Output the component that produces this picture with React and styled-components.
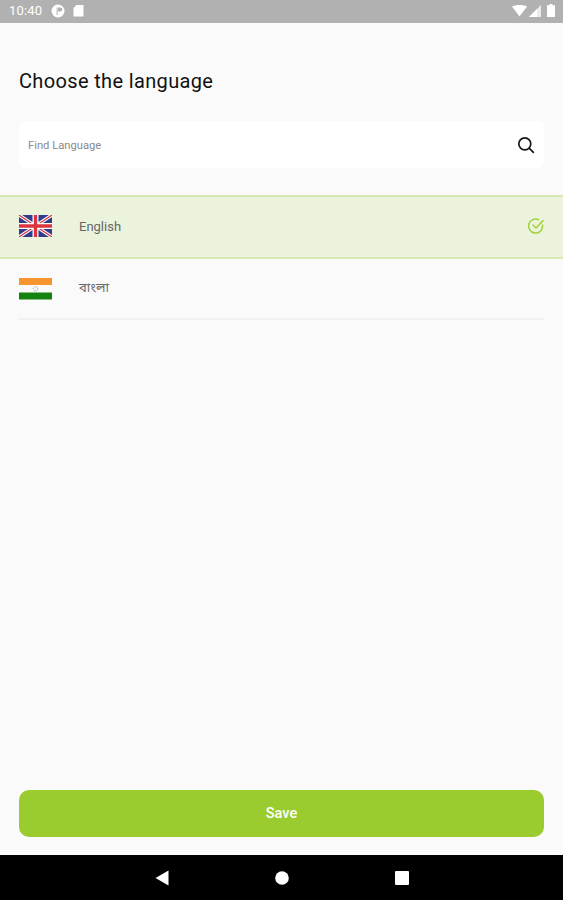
import styled, { createGlobalStyle } from "styled-components";

const GlobalStyle = createGlobalStyle`
  html, body {
    margin: 0;
    padding: 0;
    background: #fafafa;
  }
  * {
    box-sizing: border-box;
  }
`;

const Screen = styled.div`
  width: 563px;
  height: 900px;
  display: flex;
  flex-direction: column;
  background: #fafafa;
  font-family: Roboto, "Noto Sans", sans-serif;
  overflow: hidden;
`;

const StatusBar = styled.div`
  height: 23px;
  flex-shrink: 0;
  background: #b1b1b1;
  display: flex;
  align-items: center;
  justify-content: space-between;
  padding: 0 8px 2px 9px;
  color: #fff;
`;

const StatusGroup = styled.div`
  display: flex;
  align-items: center;
  gap: ${(p) => p.$gap || 8}px;
`;

const Clock = styled.span`
  font-size: 13px;
  margin-right: 1px;
  letter-spacing: 0.2px;
`;

const BatteryIcon = styled.svg`
  margin-left: 4px;
`;

const Content = styled.main`
  flex: 1;
  display: flex;
  flex-direction: column;
`;

const Title = styled.h1`
  margin: 46px 0 0 19px;
  font-size: 20px;
  line-height: 24px;
  font-weight: 400;
  letter-spacing: 0.35px;
  color: #111;
`;

const SearchBox = styled.div`
  margin: 28px 19px 0;
  height: 47px;
  background: #fff;
  border-radius: 6px;
  display: flex;
  align-items: center;
  justify-content: space-between;
  padding: 0 9px;
`;

const SearchText = styled.span`
  font-size: 11.2px;
  line-height: 15px;
  padding-top: 2px;
  color: #8a8a8a;
`;

const LanguageList = styled.div`
  margin-top: 27px;
  display: flex;
  flex-direction: column;
`;

const LanguageRow = styled.div`
  height: ${(p) => (p.$selected ? 64 : 61)}px;
  display: flex;
  align-items: center;
  padding: ${(p) => (p.$selected ? "0 18px 2px 19px" : "1px 0 0")};
  margin: ${(p) => (p.$selected ? "0" : "0 19px")};
  background: ${(p) => (p.$selected ? "#ebf3dd" : "transparent")};
  border-top: ${(p) => (p.$selected ? "2px solid #d8e8b2" : "none")};
  border-bottom: 2px solid ${(p) => (p.$selected ? "#d8e8b2" : "#f0f0f0")};
`;

const FlagBox = styled.div`
  width: 33px;
  height: 22px;
  flex-shrink: 0;
  margin-right: 27px;
  display: flex;
`;

const LanguageName = styled.span`
  flex: 1;
  font-size: 13px;
  color: #666;
  padding-bottom: ${(p) => p.$lift || 0}px;
  font-family: Roboto, "Noto Sans", "Noto Sans Bengali", "Lohit Bengali", sans-serif;
`;

const SaveWrap = styled.div`
  margin-top: auto;
  padding: 0 19px 18px;
`;

const SaveButton = styled.button`
  display: block;
  width: 100%;
  height: 47px;
  border: none;
  border-radius: 10px;
  background: #9bcc2f;
  color: #fff;
  font-family: Roboto, sans-serif;
  font-size: 14.5px;
  font-weight: 500;
`;

const NavBar = styled.nav`
  height: 45px;
  flex-shrink: 0;
  background: #000;
  display: flex;
  align-items: center;
  justify-content: center;
  gap: 106px;
`;

const UkFlag = () => (
  <svg width="33" height="22" viewBox="0 0 33 22">
    <rect width="33" height="22" fill="#2f3d8c" />
    <path d="M0 0L33 22M33 0L0 22" stroke="#fff" strokeWidth="3.4" />
    <path d="M0 0L33 22M33 0L0 22" stroke="#d8343f" strokeWidth="1.2" />
    <path d="M16.5 0V22M0 11H33" stroke="#fff" strokeWidth="6" />
    <path d="M16.5 0V22M0 11H33" stroke="#dc3540" strokeWidth="3.4" />
  </svg>
);

const IndiaFlag = () => (
  <svg width="33" height="22" viewBox="0 0 33 22">
    <rect width="33" height="7" fill="#f7962f" />
    <rect y="7" width="33" height="7.5" fill="#fafafa" />
    <rect y="14.5" width="33" height="7" fill="#14820f" />
    <circle cx="16.5" cy="10.8" r="2.2" fill="none" stroke="#9a9aa8" strokeWidth="0.9" strokeDasharray="1.2 0.8" />
  </svg>
);

const SearchIcon = () => (
  <svg width="18" height="18" viewBox="0 0 18 18" fill="none" stroke="#161616" strokeWidth="1.7" strokeLinecap="round">
    <circle cx="7.8" cy="7.8" r="6" />
    <path d="M12.4 12.4L16.4 16.4" />
  </svg>
);

const CheckIcon = () => (
  <svg width="18" height="18" viewBox="0 0 18 18" fill="none" stroke="#a3d13c" strokeWidth="1.6" strokeLinecap="round" strokeLinejoin="round">
    <path d="M15.6 8.2V9a7 7 0 1 1-4.1-6.4" />
    <path d="M6 8l3 3 7-7.4" />
  </svg>
);

const App = () => {
  return (
    <>
      <GlobalStyle />
      <Screen>
        <StatusBar>
          <StatusGroup>
            <Clock>10:40</Clock>
            <svg width="14" height="14" viewBox="0 0 14 14">
              <circle cx="7" cy="7" r="6.5" fill="#fff" />
              <path d="M7 3.5h2.4a2 2 0 0 1 0 4H7zM5.6 3.5H6.6V11H5.6z" fill="#b1b1b1" />
            </svg>
            <svg width="11" height="13" viewBox="0 0 11 13">
              <path d="M3.5 1H10.5v11.5H0.5V4z" fill="#fff" />
            </svg>
          </StatusGroup>
          <StatusGroup $gap={2}>
            <svg width="15" height="12" viewBox="0 0 15 12">
              <path d="M0 1.5C4 -0.5 11 -0.5 15 1.5L7.5 11.5z" fill="#fff" />
            </svg>
            <svg width="12" height="12" viewBox="0 0 12 12">
              <path d="M12 0V12H0z" fill="#fff" opacity="0.75" />
              <path d="M8 4V12H0z" fill="#fff" />
            </svg>
            <BatteryIcon width="8" height="13" viewBox="0 0 8 13">
              <path d="M2.5 0h3v1.2H8V13H0V1.2h2.5z" fill="#fff" />
            </BatteryIcon>
          </StatusGroup>
        </StatusBar>

        <Content>
          <Title>Choose the language</Title>
          <SearchBox>
            <SearchText>Find Language</SearchText>
            <SearchIcon />
          </SearchBox>

          <LanguageList>
            <LanguageRow $selected>
              <FlagBox>
                <UkFlag />
              </FlagBox>
              <LanguageName>English</LanguageName>
              <CheckIcon />
            </LanguageRow>
            <LanguageRow>
              <FlagBox>
                <IndiaFlag />
              </FlagBox>
              <LanguageName $lift={2}>বাংলা</LanguageName>
            </LanguageRow>
          </LanguageList>

          <SaveWrap>
            <SaveButton>Save</SaveButton>
          </SaveWrap>
        </Content>

        <NavBar>
          <svg width="14" height="16" viewBox="0 0 14 16">
            <path d="M13.5 0.5V15.5L0.5 8z" fill="#fff" />
          </svg>
          <svg width="14" height="14" viewBox="0 0 14 14">
            <circle cx="7" cy="7" r="6.8" fill="#fff" />
          </svg>
          <svg width="14" height="14" viewBox="0 0 14 14">
            <rect width="14" height="14" rx="1" fill="#fff" />
          </svg>
        </NavBar>
      </Screen>
    </>
  );
};

export default App;
